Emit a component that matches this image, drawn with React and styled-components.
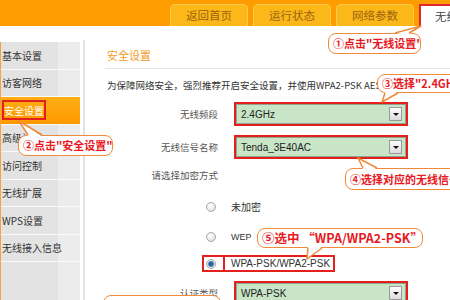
import React from "react";
import styled, { createGlobalStyle } from "styled-components";

const Global = createGlobalStyle`
  html, body { margin: 0; padding: 0; background: #fff; }
  * { box-sizing: border-box; }
`;

const Root = styled.div`
  position: relative;
  width: 450px;
  height: 300px;
  overflow: hidden;
  background: #fff;
  font-family: "Noto Sans CJK SC", "Noto Sans", sans-serif;
`;

const Header = styled.header`
  height: 26px;
  background: #ff9c00;
  display: flex;
  align-items: flex-end;
  padding-left: 170px;
  gap: 5px;
`;

const Tab = styled.div`
  flex: none;
  width: ${(p) => (p.$active ? "64px" : "78px")};
  height: 22px;
  border: ${(p) => (p.$active ? "2px solid #e0262a" : "1px solid #fcc94f")};
  border-bottom: none;
  border-radius: ${(p) => (p.$active ? "0" : "5px 5px 0 0")};
  background: ${(p) => (p.$active ? "#fff" : "#fbb818")};
  color: ${(p) => (p.$active ? "#444" : "#9c6310")};
  font-size: 11.5px;
  line-height: 20px;
  text-align: ${(p) => (p.$active ? "left" : "center")};
  padding-left: ${(p) => (p.$active ? "14px" : "0")};
  white-space: nowrap;
  overflow: hidden;
`;

const Body = styled.div`
  display: flex;
  height: 274px;
`;

const Sidebar = styled.nav`
  width: 80px;
  flex: none;
  display: flex;
  flex-direction: column;
  padding-top: 16px;
`;

const MenuList = styled.div`
  flex: 1;
  display: flex;
  flex-direction: column;
  border-left: 1px solid #f4a340;
  background: linear-gradient(to right, #e3e3e3 0, #e3e3e3 57px, #ececec 57px);
`;

const MenuItem = styled.div`
  height: 27.5px;
  flex: none;
  border-bottom: 1px solid #fafafa;
  display: flex;
  align-items: center;
  padding-left: 1px;
  font-size: 10px;
  color: ${(p) => (p.$active ? "#fff" : "#333")};
  background: ${(p) =>
    p.$active ? "linear-gradient(to bottom, #ffae14, #ff9800)" : "transparent"};
  white-space: nowrap;
`;

const Highlight = styled.span`
  display: inline-flex;
  align-items: center;
  height: 20px;
  border: 2px solid #e3201b;
  padding: 0;
`;

const Divider = styled.div`
  width: 5px;
  flex: none;
  margin-top: 14px;
  background: linear-gradient(to right, #fff 0, #fff 3px, #e2e2e2 3px);
`;

const Content = styled.main`
  flex: 1;
  display: flex;
  flex-direction: column;
  padding-top: 21px;
  min-width: 0;
`;

const Title = styled.h2`
  margin: 0 0 0 20px;
  padding: 0 0 5px 2px;
  border-bottom: 1px solid #e6e6e6;
  font-size: 11px;
  line-height: 16px;
  font-weight: normal;
  color: #f39c1f;
`;

const Desc = styled.p`
  margin: 9px 0 0 22px;
  font-size: 9.5px;
  line-height: 14px;
  color: #333;
  white-space: nowrap;
`;

const Row = styled.div`
  display: grid;
  grid-template-columns: 133px 174px;
  column-gap: 16px;
  align-items: center;
  margin-top: ${(p) => p.$mt}px;
  height: ${(p) => p.$h}px;
`;

const Label = styled.div`
  text-align: right;
  font-size: 9.5px;
  color: #555;
  white-space: nowrap;
`;

const SelectWrap = styled.div`
  height: 24px;
  border: 2px solid #e3201b;
  display: flex;
`;

const Select = styled.div`
  flex: 1;
  display: flex;
  align-items: center;
  justify-content: space-between;
  background: #c8e6c7;
  border: 1px solid #8fa58f;
  padding: 0 3px 0 4px;
  font-family: "Liberation Sans", Arial, sans-serif;
  font-size: 10px;
  color: #222;
`;

const Arrow = styled.span`
  width: 13px;
  height: 14px;
  border: 1px solid #9a9a9a;
  background: linear-gradient(#fdfdfd, #dcdcdc);
  display: flex;
  align-items: center;
  justify-content: center;
  &::after {
    content: "";
    border-left: 3px solid transparent;
    border-right: 3px solid transparent;
    border-top: 3px solid #111;
  }
`;

const RadioRow = styled.div`
  display: grid;
  grid-template-columns: 117px 23px max-content;
  justify-content: start;
  align-items: center;
  margin-top: ${(p) => p.$mt}px;
  height: 17px;
`;

const RadioBox = styled.div`
  grid-column: 2;
  height: 17px;
  border: 2px solid ${(p) => (p.$marked ? "#e3201b" : "transparent")};
  display: flex;
  align-items: center;
  padding-left: 2px;
`;

const Radio = styled.span`
  width: 10px;
  height: 10px;
  border-radius: 50%;
  border: 1px solid #a9a9a9;
  background: ${(p) =>
    p.$checked
      ? "radial-gradient(circle, #245f9e 0, #2f6aa8 2.2px, #9bb6d2 3px, #e6e6e6 3.6px)"
      : "radial-gradient(circle at 40% 35%, #ffffff 0, #e9e9e9 60%, #cfcfcf 100%)"};
`;

const RadioText = styled.div`
  height: 17px;
  margin-left: -2px;
  border: 2px solid ${(p) => (p.$marked ? "#e3201b" : "transparent")};
  padding: 0 3px 0 6px;
  display: flex;
  align-items: center;
  white-space: nowrap;
  font-size: ${(p) => p.$size || 10}px;
  color: #333;
  font-family: ${(p) =>
    p.$latin ? '"Liberation Sans", Arial, sans-serif' : '"Noto Sans CJK SC", sans-serif'};
`;

const CalloutBox = styled.div`
  position: absolute;
  left: ${(p) => p.$x}px;
  top: ${(p) => p.$y}px;
  width: ${(p) => p.$w}px;
  height: ${(p) => p.$h}px;
  z-index: 5;
`;

const Bubble = styled.div`
  width: 100%;
  height: 100%;
  border: 1.5px solid #f08a3a;
  border-radius: 8px;
  background: #fff;
  color: #e8191f;
  font-weight: bold;
  font-size: ${(p) => p.$size}px;
  line-height: 1;
  display: flex;
  align-items: ${(p) => (p.$top ? "flex-start" : "center")};
  padding: ${(p) => (p.$top ? "5px 4px 0" : "0 4px")};
  white-space: nowrap;
  overflow: hidden;
`;

const Tail = styled.svg`
  position: absolute;
  left: 0;
  top: 0;
  overflow: visible;
  pointer-events: none;
`;

function Callout({ x, y, w, h, size = 11, tail, top, children }) {
  const [b1, tip, b2, side] = tail || [];
  const inset = side === "top" ? 1.6 : -1.6;
  const baseY = side === "top" ? 0 : h;
  return (
    <CalloutBox $x={x} $y={y} $w={w} $h={h}>
      <Bubble $size={size} $top={top}>{children}</Bubble>
      {tail && (
        <Tail width={w} height={h}>
          <polygon
            points={`${b1},${baseY + inset} ${tip[0]},${tip[1]} ${b2},${baseY + inset}`}
            fill="#fff"
          />
          <polyline
            points={`${b1},${baseY} ${tip[0]},${tip[1]} ${b2},${baseY}`}
            fill="none"
            stroke="#f08a3a"
            strokeWidth="1.5"
            strokeLinejoin="round"
          />
        </Tail>
      )}
    </CalloutBox>
  );
}

const menu = [
  "基本设置",
  "访客网络",
  "安全设置",
  "高级设置",
  "访问控制",
  "无线扩展",
  "WPS设置",
  "无线接入信息",
];

export default function App() {
  return (
    <Root>
      <Global />
      <Header>
        <Tab>返回首页</Tab>
        <Tab>运行状态</Tab>
        <Tab>网络参数</Tab>
        <Tab $active>无线设置</Tab>
      </Header>
      <Body>
        <Sidebar>
          <MenuList>
            {menu.map((m) =>
              m === "安全设置" ? (
                <MenuItem key={m} $active>
                  <Highlight>{m}</Highlight>
                </MenuItem>
              ) : (
                <MenuItem key={m}>{m}</MenuItem>
              )
            )}
          </MenuList>
        </Sidebar>
        <Divider />
        <Content>
          <Title>安全设置</Title>
          <Desc>为保障网络安全，强烈推荐开启安全设置，并使用WPA2-PSK AES加密方式。</Desc>
          <Row $mt={10} $h={24}>
            <Label>无线频段</Label>
            <SelectWrap>
              <Select>
                2.4GHz
                <Arrow />
              </Select>
            </SelectWrap>
          </Row>
          <Row $mt={9} $h={24}>
            <Label>无线信号名称</Label>
            <SelectWrap>
              <Select>
                Tenda_3E40AC
                <Arrow />
              </Select>
            </SelectWrap>
          </Row>
          <Row $mt={9} $h={16}>
            <Label>请选择加密方式</Label>
          </Row>
          <RadioRow $mt={16}>
            <RadioBox>
              <Radio />
            </RadioBox>
            <RadioText>未加密</RadioText>
          </RadioRow>
          <RadioRow $mt={13}>
            <RadioBox>
              <Radio />
            </RadioBox>
            <RadioText $latin $size={9}>WEP</RadioText>
          </RadioRow>
          <RadioRow $mt={10}>
            <RadioBox $marked>
              <Radio $checked />
            </RadioBox>
            <RadioText $marked $latin>WPA-PSK/WPA2-PSK</RadioText>
          </RadioRow>
          <Row $mt={9} $h={24}>
            <Label>认证类型</Label>
            <SelectWrap>
              <Select>
                WPA-PSK
                <Arrow />
              </Select>
            </SelectWrap>
          </Row>
        </Content>
      </Body>

      <Callout x={328} y={33} w={93} h={21} tail={[67, [93, -7], 81, "top"]}>
        ①点击"无线设置"
      </Callout>
      <Callout x={18} y={135} w={95} h={21} tail={[10, [1, -14], 24, "top"]}>
        ②点击"安全设置"
      </Callout>
      <Callout x={377} y={74} w={92} h={19} tail={[8, [5, 28], 21, "bottom"]}>
        ③选择"2.4GHz"
      </Callout>
      <Callout x={345} y={168} w={150} h={22} tail={[18, [13, -10], 32, "top"]}>
        ④选择对应的无线信号名称
      </Callout>
      <Callout x={257} y={228} w={166} h={20} size={12.5} tail={[51, [50, 31], 65, "bottom"]}>
        ⑤选中 “WPA/WPA2-PSK”
      </Callout>
      <Callout x={103} y={295} w={118} h={22} top>
        ⑥选择"WPA2-PSK"
      </Callout>
    </Root>
  );
}
